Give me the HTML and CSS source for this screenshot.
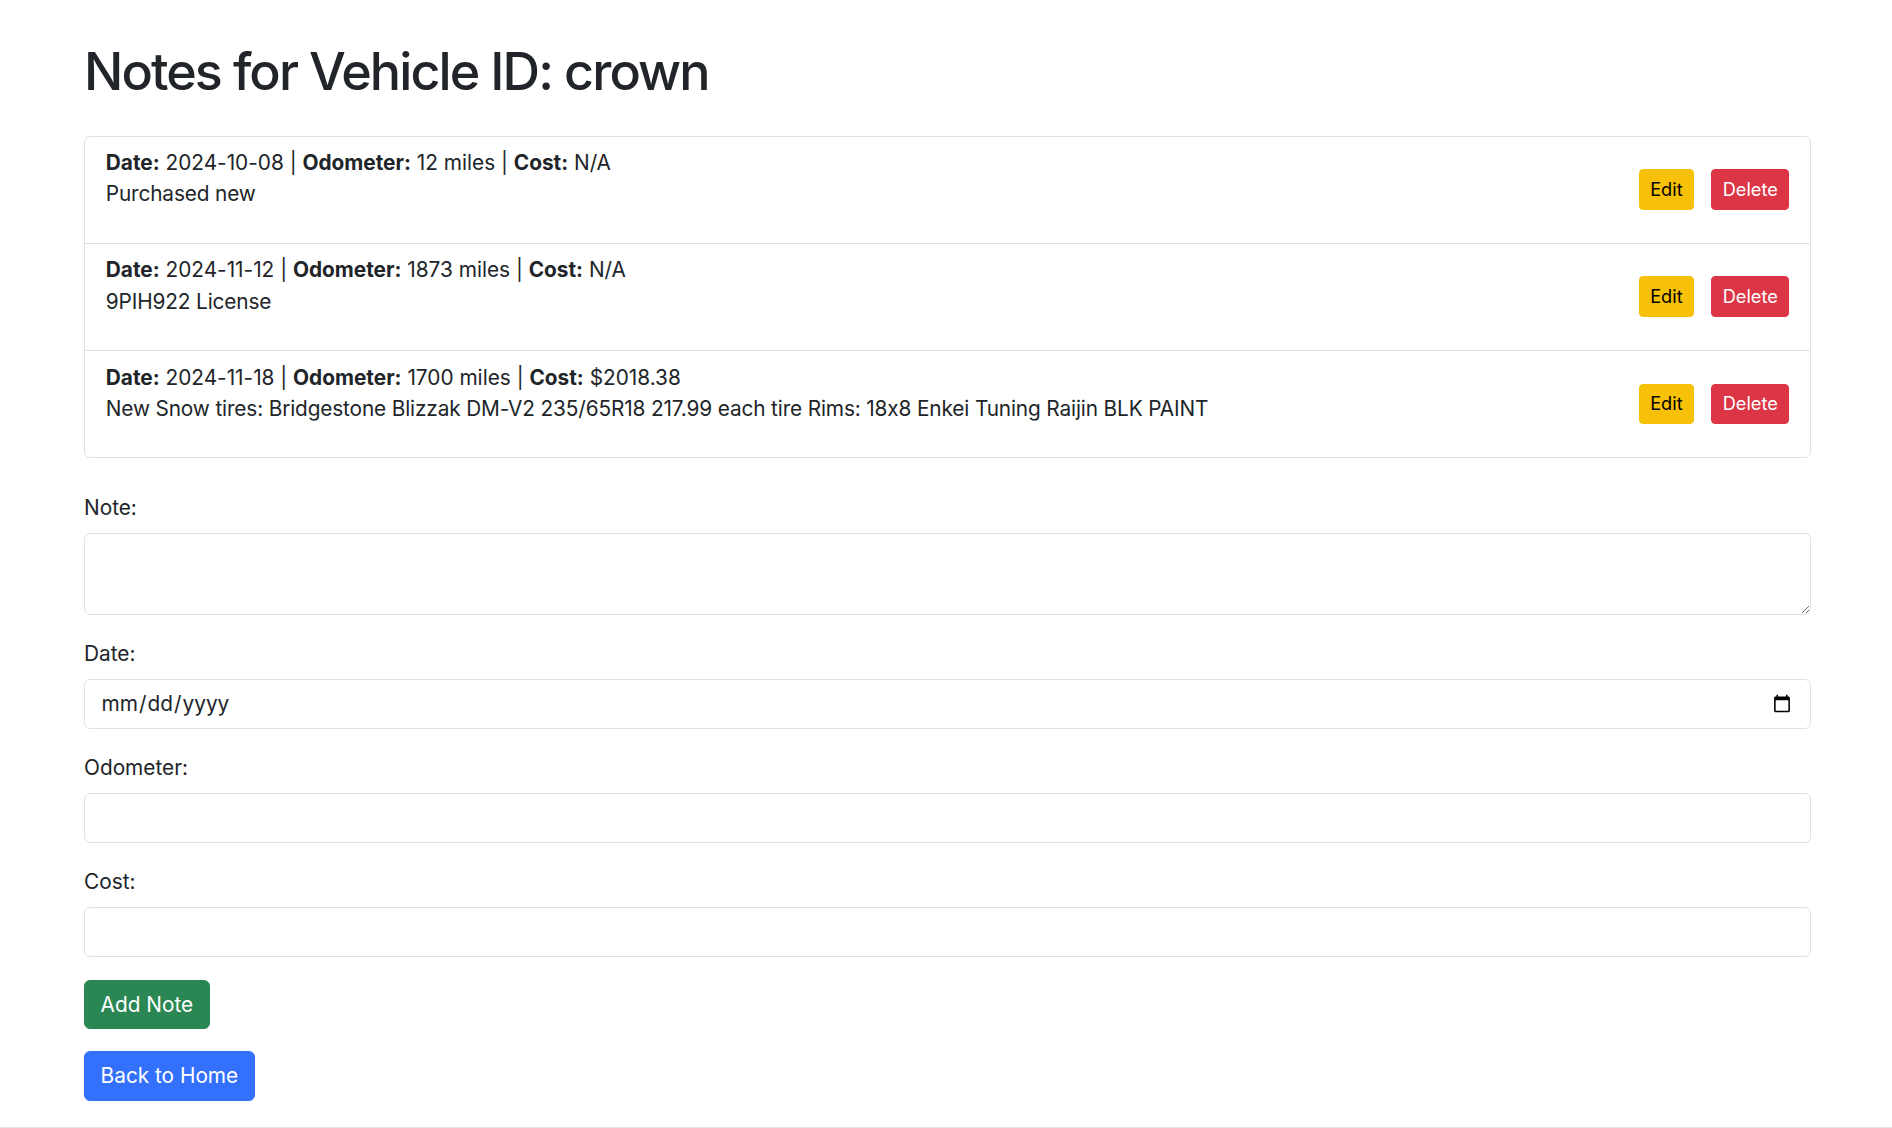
FILE: index.html
```html
<!DOCTYPE html>
<html lang="en">
<head>
<meta charset="utf-8">
<title>Vehicle Notes</title>
<link rel="stylesheet" href="styles.css">
</head>
<body>
<div class="container">
  <h1 class="title">Notes for Vehicle ID: crown</h1>

  <ul class="notes">
    <li class="note">
      <div class="note-text">
        <strong>Date:</strong> 2024-10-08 | <strong>Odometer:</strong> 12 miles | <strong>Cost:</strong> N/A
        <p>Purchased new</p>
      </div>
      <div class="note-actions">
        <button class="btn-sm btn-warning">Edit</button>
        <button class="btn-sm btn-danger">Delete</button>
      </div>
    </li>
    <li class="note">
      <div class="note-text">
        <strong>Date:</strong> 2024-11-12 | <strong>Odometer:</strong> 1873 miles | <strong>Cost:</strong> N/A
        <p>9PIH922 License</p>
      </div>
      <div class="note-actions">
        <button class="btn-sm btn-warning">Edit</button>
        <button class="btn-sm btn-danger">Delete</button>
      </div>
    </li>
    <li class="note">
      <div class="note-text">
        <strong>Date:</strong> 2024-11-18 | <strong>Odometer:</strong> 1700 miles | <strong>Cost:</strong> $2018.38
        <p>New Snow tires: Bridgestone Blizzak DM-V2 235/65R18 217.99 each tire Rims: 18x8 Enkei Tuning Raijin BLK PAINT</p>
      </div>
      <div class="note-actions">
        <button class="btn-sm btn-warning">Edit</button>
        <button class="btn-sm btn-danger">Delete</button>
      </div>
    </li>
  </ul>

  <form class="note-form">
    <div class="field">
      <label class="field-label" for="note">Note:</label>
      <textarea id="note" class="control control-area"></textarea>
    </div>
    <div class="field">
      <label class="field-label" for="date">Date:</label>
      <input id="date" type="date" class="control">
    </div>
    <div class="field">
      <label class="field-label" for="odo">Odometer:</label>
      <input id="odo" type="number" class="control">
    </div>
    <div class="field">
      <label class="field-label" for="cost">Cost:</label>
      <input id="cost" type="text" class="control">
    </div>
    <div class="actions">
      <button type="button" class="btn btn-success">Add Note</button>
      <a class="btn btn-primary" href="#">Back to Home</a>
    </div>
  </form>
</div>
</body>
</html>
```

FILE: styles.css
```css
html {
  height: 100%;
}

body {
  margin: 0;
  min-height: 100%;
  box-sizing: border-box;
  border-bottom: 1px solid #e2e3e5;
  background: #fff;
  color: #212529;
  font-family: Inter, "Liberation Sans", sans-serif;
  font-size: 20.8px;
  line-height: 31.2px;
  font-feature-settings: "calt" 0;
}

.container {
  width: 1727px;
  margin-left: 84px;
  padding-top: 41px;
}

.title {
  margin: 0 0 32.4px;
  font-size: 52px;
  font-weight: 500;
  line-height: 62.4px;
  letter-spacing: -1.9px;
}

.notes {
  list-style: none;
  margin: 0;
  padding: 0;
  border: 1px solid #dee2e6;
  border-radius: 6px;
}

.note {
  display: flex;
  justify-content: space-between;
  align-items: center;
  padding: 10.4px 20.8px 11.4px;
  border-top: 1px solid #dee2e6;
}

.note:first-child {
  border-top: 0;
}

.note-text p {
  margin: 0 0 22px;
  letter-spacing: -0.14px;
}

.note-text strong {
  font-weight: 700;
}

.note-actions {
  display: flex;
  gap: 17.3px;
}

.btn-sm {
  font-family: inherit;
  font-size: 18.2px;
  line-height: 27.3px;
  padding: 5.5px 10.4px;
  border: 1px solid transparent;
  border-radius: 4px;
  cursor: pointer;
}

.btn-warning {
  background: #f8c109;
  border-color: #f8c109;
  color: #000;
}

.btn-danger {
  background: #dc3545;
  border-color: #dc3545;
  color: #fff;
}

.note-form {
  padding-top: 33.3px;
}

.field {
  margin-bottom: 23.1px;
}

.field-label {
  display: block;
  margin-bottom: 10.4px;
}

.control {
  display: block;
  box-sizing: border-box;
  width: 100%;
  height: 49.4px;
  margin: 0;
  padding: 7.8px 15.6px;
  font-family: inherit;
  font-size: 20.8px;
  line-height: 31.2px;
  color: #212529;
  background: #fff;
  border: 1px solid #dee2e6;
  border-radius: 6px;
  outline: none;
}

.control-area {
  height: 81.3px;
  resize: vertical;
}

.actions {
  display: flex;
  flex-direction: column;
  align-items: flex-start;
  gap: 22px;
}

.btn {
  display: inline-block;
  box-sizing: border-box;
  height: 49.4px;
  padding: 7.8px 15.6px;
  font-family: inherit;
  font-size: 20.8px;
  line-height: 31.2px;
  border: 1px solid transparent;
  border-radius: 6px;
  color: #fff;
  text-decoration: none;
  cursor: pointer;
}

.btn-success {
  background: #2a8754;
  border-color: #2a8754;
}

.btn-primary {
  background: #3371fc;
  border-color: #3371fc;
}
```
